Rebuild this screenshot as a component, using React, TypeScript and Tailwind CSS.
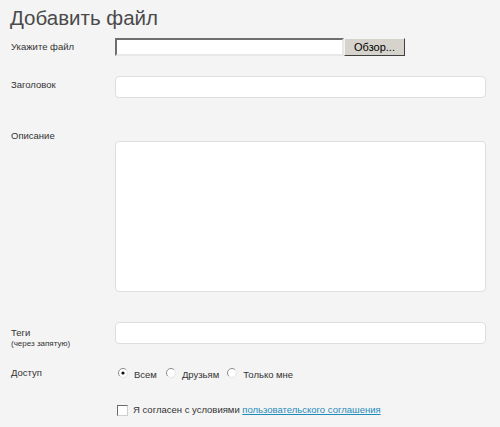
import React from "react";

function Radio({ checked }: { checked?: boolean }) {
  return (
    <svg width="10" height="10" viewBox="0 0 10 10" className="shrink-0">
      <circle cx="5" cy="5" r="4.5" fill="#fff" />
      <path d="M1.8 8.2 A4.5 4.5 0 0 1 8.2 1.8" fill="none" stroke="#8a8a8a" strokeWidth="1" />
      <path d="M8.2 1.8 A4.5 4.5 0 0 1 1.8 8.2" fill="none" stroke="#e4e4e4" strokeWidth="1" />
      {checked && <circle cx="5" cy="5" r="1.6" fill="#111" />}
    </svg>
  );
}

export default function App() {
  const label = "w-[104px] shrink-0 text-[9.5px] leading-[12px]";
  const field = "w-[371px] bg-white border border-[#dedede] rounded-[4px]";

  return (
    <div className="min-h-screen bg-[#f4f4f4] font-['Liberation_Sans',Arial,sans-serif] text-[#333]">
      <div className="pl-[10px] pt-[6px]">
        <h1 className="text-[20.5px] leading-[24px] text-[#4a4a4a]">Добавить файл</h1>
      </div>

      <form className="pl-[11px]">
        {/* файл */}
        <div className="mt-[8px] flex items-center h-[18px]">
          <span className={label}>Укажите файл</span>
          <div className="flex h-[18px]">
            <div className="w-[229px] h-[18px] bg-white border-2 border-t-[#6f6f6f] border-l-[#6f6f6f] border-b-[#e8e8e8] border-r-[#e8e8e8]" />
            <button
              type="button"
              className="w-[61px] h-[18px] bg-[#d6d3cc] border border-t-[#f4f4f4] border-l-[#f4f4f4] border-b-[#404040] border-r-[#404040] text-[11px] leading-[14px] text-black"
            >
              Обзор...
            </button>
          </div>
        </div>

        {/* заголовок */}
        <div className="mt-[20px] flex items-start">
          <span className={`${label} pt-[3px]`}>Заголовок</span>
          <div className={`${field} h-[22px]`} />
        </div>

        {/* описание */}
        <div className="mt-[32px] flex items-start">
          <span className={label}>Описание</span>
          <div className={`${field} h-[151px] mt-[11px]`} />
        </div>

        {/* теги */}
        <div className="mt-[30px] flex items-start">
          <div className="w-[104px] shrink-0 pt-[5px]">
            <div className="text-[9.5px] leading-[12px]">Теги</div>
            <div className="text-[8px] leading-[10px]">(через запятую)</div>
          </div>
          <div className={`${field} h-[22px]`} />
        </div>

        {/* доступ */}
        <div className="mt-[17px] flex items-center h-[14px]">
          <span className={label}>Доступ</span>
          <div className="flex items-center text-[9.5px] leading-[12px] pl-[3px]">
            <Radio checked />
            <span className="ml-[6px] mt-[3px]">Всем</span>
            <span className="ml-[9px]"><Radio /></span>
            <span className="ml-[6px] mt-[3px]">Друзьям</span>
            <span className="ml-[8px]"><Radio /></span>
            <span className="ml-[6px] mt-[3px]">Только мне</span>
          </div>
        </div>

        {/* соглашение */}
        <div className="mt-[24px] flex items-center h-[12px]">
          <span className="w-[104px] shrink-0" />
          <div className="flex items-center pl-[2px] text-[9.5px] leading-[12px]">
            <span className="w-[11px] h-[11px] bg-white border border-t-[#6a6a6a] border-l-[#6a6a6a] border-b-[#cfcfcf] border-r-[#cfcfcf]" />
            <span className="ml-[5px]">
              Я согласен с условиями{" "}
              <a href="#" className="text-[#1f8bbb] underline">
                пользовательского соглашения
              </a>
            </span>
          </div>
        </div>
      </form>
    </div>
  );
}
